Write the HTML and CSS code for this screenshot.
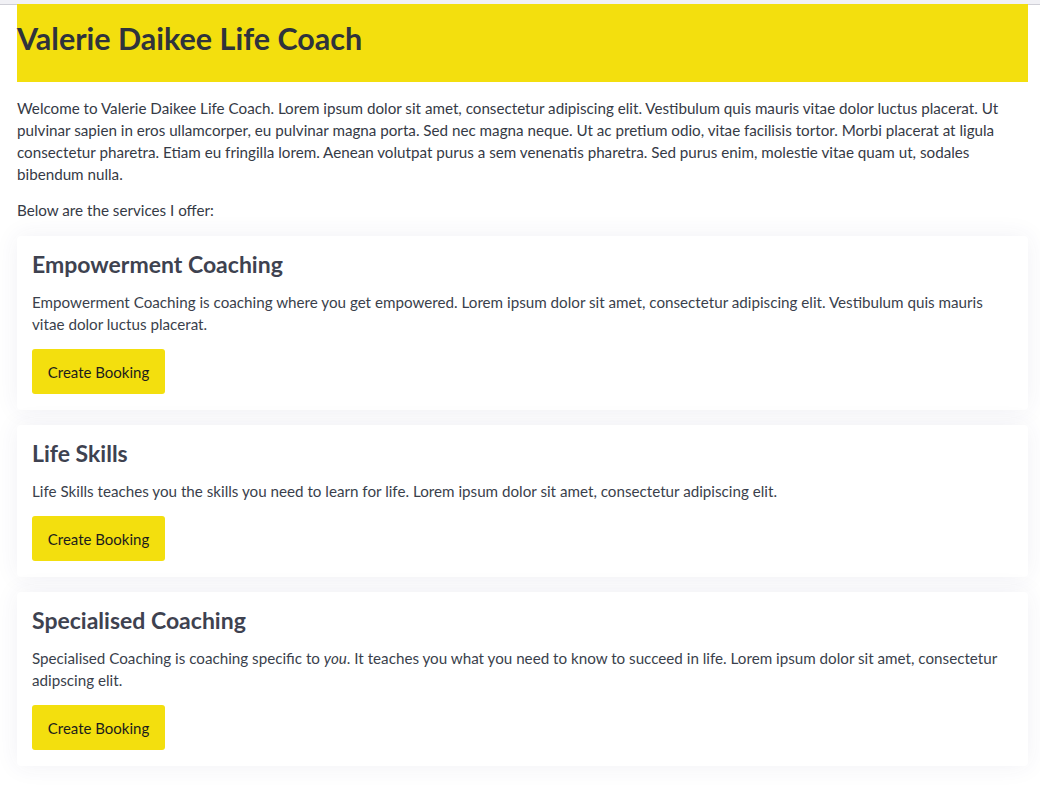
FILE: index.html
```html
<!DOCTYPE html>
<html lang="en">
<head>
<meta charset="utf-8">
<title>Valerie Daikee Life Coach</title>
<link rel="stylesheet" href="styles.css">
</head>
<body>
<div class="topbar"></div>
<main class="page">
  <header class="hero">
    <h1 class="hero-title">Valerie Daikee Life Coach</h1>
  </header>
  <p class="intro">Welcome to Valerie Daikee Life Coach. Lorem ipsum dolor sit amet, consectetur adipiscing elit. Vestibulum quis mauris vitae dolor luctus placerat. Ut pulvinar sapien in eros ullamcorper, eu pulvinar magna porta. Sed nec magna neque. Ut ac pretium odio, vitae facilisis tortor. Morbi placerat at ligula consectetur pharetra. Etiam eu fringilla lorem. Aenean volutpat purus a sem venenatis pharetra. Sed purus enim, molestie vitae quam ut, sodales bibendum nulla.</p>
  <p class="intro lead">Below are the services I offer:</p>
  <section class="services">
    <article class="card">
      <h2 class="card-title">Empowerment Coaching</h2>
      <p class="card-text">Empowerment Coaching is coaching where you get empowered. Lorem ipsum dolor sit amet, consectetur adipiscing elit. Vestibulum quis mauris vitae dolor luctus placerat.</p>
      <button class="btn" type="button">Create Booking</button>
    </article>
    <article class="card">
      <h2 class="card-title">Life Skills</h2>
      <p class="card-text">Life Skills teaches you the skills you need to learn for life. Lorem ipsum dolor sit amet, consectetur adipiscing elit.</p>
      <button class="btn" type="button">Create Booking</button>
    </article>
    <article class="card">
      <h2 class="card-title">Specialised Coaching</h2>
      <p class="card-text">Specialised Coaching is coaching specific to <em>you</em>. It teaches you what you need to know to succeed in life. Lorem ipsum dolor sit amet, consectetur adipscing elit.</p>
      <button class="btn" type="button">Create Booking</button>
    </article>
  </section>
</main>
</body>
</html>
```
FILE: styles.css
```css
* { box-sizing: border-box; }
html, body { margin: 0; padding: 0; background: #ffffff; }
body {
  font-family: "Lato", "Open Sans", sans-serif;
  color: #353a46;
  font-size: 15.2px;
  line-height: 22px;
}
.topbar {
  height: 5px;
  background: #f1f1f5;
  border-bottom: 1px solid #cfcfd6;
}
.page {
  padding: 0 12px 20px 17px;
  margin-top: -1px;
}
.hero {
  background: #f3df0e;
  height: 78px;
  padding-top: 16px;
}
.hero-title {
  margin: 0;
  font-size: 30.5px;
  line-height: 36px;
  font-weight: 700;
  color: #2f333c;
}
.intro {
  margin: 15px 0 0;
}
.lead { margin-top: 14px; }
.services {
  margin-top: 15px;
  display: flex;
  flex-direction: column;
  gap: 15px;
}
.card {
  background: #ffffff;
  border-radius: 4px;
  padding: 13px 15px 16px;
  box-shadow: 0 0 24px rgba(60, 60, 120, 0.07);
}
.card-title {
  margin: 0;
  font-size: 23px;
  line-height: 30px;
  font-weight: 700;
  color: #3e4250;
}
.card-text {
  margin: 12px 0 0;
  color: #3a3f4c;
}
.btn {
  margin-top: 14px;
  display: block;
  height: 45px;
  width: 133px;
  border: none;
  border-radius: 3px;
  background: #f3df0e;
  color: #1c1c1c;
  font-family: inherit;
  font-size: 15px;
  cursor: pointer;
}
```
